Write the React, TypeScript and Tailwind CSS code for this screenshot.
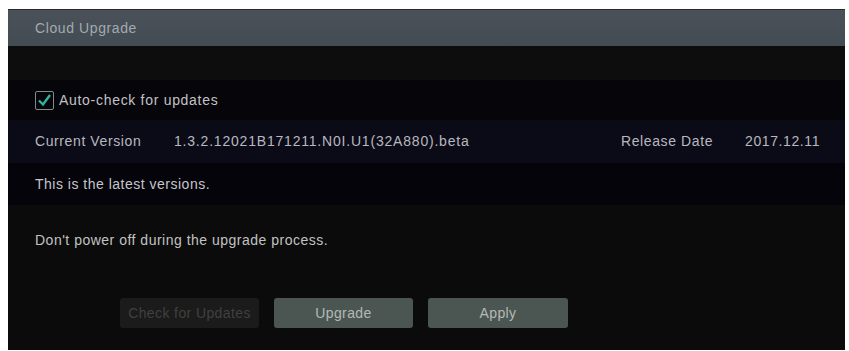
import React from "react";

export default function App() {
    return (
        <div className="w-[849px] h-[351px] bg-white pl-[8px] pt-[9px] pr-[4px] pb-[1px]" style={{ fontFamily: '"Liberation Sans", Arial, sans-serif' }}>
            <div className="flex flex-col h-full bg-[#0b0b0b] border-t border-[#2a2a2a]">
                <div className="h-[36px] flex items-center px-[27px] bg-gradient-to-b from-[#4a5158] to-[#444c53] text-[14px] tracking-[0.6px] text-[#a2aab1]">
                    Cloud Upgrade
                </div>
                <div className="h-[34px] bg-[#0d0d0d]" />
                <div className="h-[40px] flex items-center px-[27px] bg-[#05050a]">
                    <div className="w-[19px] h-[19px] border border-[#7f8c8c] rounded-[2px] flex items-center justify-center mr-[5px]">
                        <svg width="15" height="14" viewBox="0 0 15 14">
                            <path d="M2 7.5 L6 11.5 L13 2" fill="none" stroke="#2fb5a1" strokeWidth="2.4" />
                        </svg>
                    </div>
                    <span className="text-[14px] tracking-[0.7px] text-[#c2c2c6]">Auto-check for updates</span>
                </div>
                <div className="h-[43px] flex items-center px-[27px] bg-[#0b0b17] text-[14px] tracking-[0.6px] text-[#b8b8bf]">
                    <span className="w-[139px]">Current Version</span>
                    <span className="flex-1 tracking-[0.8px]">1.3.2.12021B171211.N0I.U1(32A880).beta</span>
                    <span className="w-[124px]">Release Date</span>
                    <span className="w-[73px]">2017.12.11</span>
                </div>
                <div className="h-[42px] flex items-center px-[27px] bg-[#04040a] text-[14px] tracking-[0.5px] text-[#c6c6ca]">
                    This is the latest versions.
                </div>
                <div className="flex-1 flex flex-col px-[27px]">
                    <div className="h-[70px] flex items-center text-[14px] tracking-[0.5px] text-[#c2c2c2]">
                        Don't power off during the upgrade process.
                    </div>
                    <div className="flex gap-[15px] pl-[85px] mt-[23px]">
                        <button className="w-[139px] h-[30px] rounded-[3px] bg-[#1b1b1b] text-[14px] tracking-[0.4px] text-[#404040]">
                            Check for Updates
                        </button>
                        <button className="w-[139px] h-[30px] rounded-[3px] bg-[#4b5652] text-[14px] tracking-[0.4px] text-[#b3bab6]">
                            Upgrade
                        </button>
                        <button className="w-[140px] h-[30px] rounded-[3px] bg-[#4b5652] text-[14px] tracking-[0.4px] text-[#b3bab6]">
                            Apply
                        </button>
                    </div>
                </div>
            </div>
        </div>
    );
}
